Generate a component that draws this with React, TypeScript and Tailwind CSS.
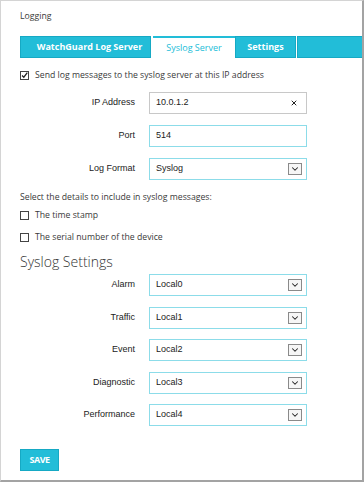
import { Fragment } from "react";
import { X, ChevronDown } from "lucide-react";

const fields = [
  { label: "Alarm", value: "Local0" },
  { label: "Traffic", value: "Local1" },
  { label: "Event", value: "Local2" },
  { label: "Diagnostic", value: "Local3" },
  { label: "Performance", value: "Local4" },
];

function Arrow() {
  return (
    <span className="flex h-[12px] w-[14px] items-center justify-center border border-[#8a8a8a] bg-[#f6f6f6]">
      <ChevronDown size={10} strokeWidth={2.5} className="text-[#222]" />
    </span>
  );
}

function Check({ checked }: { checked?: boolean }) {
  return (
    <span className="flex h-[9px] w-[9px] shrink-0 items-center justify-center border border-[#444] bg-white">
      {checked && (
        <svg viewBox="0 0 10 10" className="h-[9px] w-[9px]">
          <path d="M1.5 5 L4 7.5 L9 1" fill="none" stroke="#222" strokeWidth="1.8" />
        </svg>
      )}
    </span>
  );
}

function SelectBox({ value }: { value: string }) {
  return (
    <div className="flex h-[22px] w-[158px] items-center justify-between border border-[#8cdce9] bg-white pl-[6px] pr-[4px] font-['Liberation_Sans'] text-[9px] text-[#222]">
      <span>{value}</span>
      <Arrow />
    </div>
  );
}

export default function App() {
  return (
    <div className="h-[482px] w-[364px] overflow-hidden border-l border-t border-r-2 border-b-2 border-l-[#d4d4d4] border-t-[#d4d4d4] border-r-[#a3a3a3] border-b-[#a3a3a3] bg-white font-['Open_Sans'] text-[#3a3a3a]">
      <div className="pl-[19px] pt-[9px] text-[8.7px] leading-[12px]">Logging</div>

      {/* tabs */}
      <div className="mt-[14px] flex h-[22px] pl-[19px] text-[9px] font-bold">
        <div className="flex w-[131px] items-center justify-center border border-[#16a9c4] bg-[#22bdd8] pl-[8px] text-white">
          WatchGuard Log Server
        </div>
        <div className="ml-[2px] flex w-[82px] items-center justify-center border-t-2 border-[#22bdd8] bg-white font-normal text-[#22bdd8]">
          Syslog Server
        </div>
        <div className="flex w-[61px] items-center justify-center border border-[#16a9c4] bg-[#22bdd8] text-white">
          Settings
        </div>
        <div className="ml-[1px] flex-1 border border-r-0 border-[#16a9c4] bg-[#22bdd8]"></div>
      </div>

      <div className="mt-[11px] flex items-center gap-[6px] pl-[19px] text-[8.7px] leading-[12px]">
        <Check checked />
        <span>Send log messages to the syslog server at this IP address</span>
      </div>

      <div className="mt-[11px] grid grid-cols-[115px_158px] gap-x-[14px] gap-y-[11px] pl-[19px] font-['Liberation_Sans'] text-[9px] text-[#222]">
        <div className="flex items-center justify-end">IP Address</div>
        <div className="flex h-[22px] items-center justify-between border border-[#c8c8c8] bg-white pl-[6px] pr-[8px]">
          <span>10.0.1.2</span>
          <X size={8} strokeWidth={3} className="text-[#222]" />
        </div>
        <div className="flex items-center justify-end">Port</div>
        <div className="flex h-[22px] items-center border border-[#8cdce9] bg-white pl-[6px]">514</div>
        <div className="flex items-center justify-end">Log Format</div>
        <SelectBox value="Syslog" />
      </div>

      <div className="mt-[11px] pl-[19px] text-[8.7px] leading-[12px]">Select the details to include in syslog messages:</div>
      <div className="mt-[6px] flex items-center gap-[6px] pl-[19px] text-[8.7px] leading-[12px]">
        <Check />
        <span>The time stamp</span>
      </div>
      <div className="mt-[10px] flex items-center gap-[6px] pl-[19px] text-[8.7px] leading-[12px]">
        <Check />
        <span>The serial number of the device</span>
      </div>

      <div className="mt-[10px] pl-[19px] text-[14px] font-light leading-[18px] text-[#333]">Syslog Settings</div>

      <div className="mt-[3px] grid grid-cols-[115px_158px] gap-x-[14px] gap-y-[10.5px] pl-[19px] font-['Liberation_Sans'] text-[9px] text-[#222]">
        {fields.map((f) => (
          <Fragment key={f.label}>
            <div className="flex items-center justify-end">{f.label}</div>
            <SelectBox value={f.value} />
          </Fragment>
        ))}
      </div>

      <div className="mt-[23px] pl-[19px]">
        <button className="flex h-[22px] w-[39px] items-center justify-center border border-[#16a9c4] bg-[#22bdd8] text-[9px] font-bold tracking-[-0.5px] text-white">
          SAVE
        </button>
      </div>
    </div>
  );
}
